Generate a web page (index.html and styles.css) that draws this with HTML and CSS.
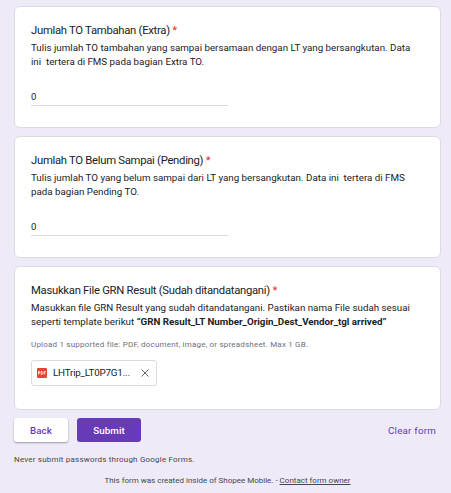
FILE: index.html
```html
<!DOCTYPE html>
<html lang="id">
<head>
    <meta charset="UTF-8">
    <meta name="viewport" content="width=device-width, initial-scale=1.0">
    <title>Form</title>
    <link rel="stylesheet" href="styles.css">
</head>
<body>
    <form class="form" onsubmit="return false">
        <div class="card">
            <h2 class="title">Jumlah TO Tambahan (Extra) <span class="required">*</span></h2>
            <p class="description">Tulis jumlah TO tambahan yang sampai bersamaan dengan LT yang bersangkutan. Data<br>ini&nbsp; tertera di FMS pada bagian Extra TO.</p>
            <input class="answer" type="text" value="0" aria-label="Jumlah TO Tambahan">
        </div>

        <div class="card">
            <h2 class="title">Jumlah TO Belum Sampai (Pending) <span class="required">*</span></h2>
            <p class="description">Tulis jumlah TO yang belum sampai dari LT yang bersangkutan. Data ini&nbsp; tertera di FMS<br>pada bagian Pending TO.</p>
            <input class="answer" type="text" value="0" aria-label="Jumlah TO Belum Sampai">
        </div>

        <div class="card card-file">
            <h2 class="title">Masukkan File GRN Result (Sudah ditandatangani) <span class="required">*</span></h2>
            <p class="description">Masukkan file GRN Result yang sudah ditandatangani. Pastikan nama File sudah sesuai<br>seperti template berikut <b>“GRN Result_LT Number_Origin_Dest_Vendor_tgl arrived”</b></p>
            <p class="hint">Upload 1 supported file: PDF, document, image, or spreadsheet. Max 1 GB.</p>
            <div class="file">
                <svg class="file-icon" viewBox="0 0 10 10" width="10" height="10">
                    <rect width="10" height="10" rx="1" fill="#ea4335"/>
                    <path d="M1.500 6.500v-3h1.200v1.600H1.700M4.200 3.500v3h.8l.7-.8V4.300l-.7-.8zM7.200 6.500v-3h1.500M7.200 5h1.200" fill="none" stroke="#fff" stroke-width=".8"/>
                </svg>
                <span class="file-name">LHTrip_LT0P7G1...</span>
                <svg class="file-remove" viewBox="0 0 8 8" width="8" height="8">
                    <path d="M.5.5l7 7M7.500.5l-7 7" fill="none" stroke="#5f6368" stroke-width="1"/>
                </svg>
            </div>
        </div>

        <div class="actions">
            <button class="btn btn-back" type="button">Back</button>
            <button class="btn btn-submit" type="submit">Submit</button>
            <button class="btn btn-clear" type="reset">Clear form</button>
        </div>
    </form>

    <footer>
        <p class="warning">Never submit passwords through Google Forms.</p>
        <p class="created">This form was created inside of Shopee Mobile. - <a href="#">Contact form owner</a></p>
    </footer>
</body>
</html>
```
FILE: styles.css
```css
* {
    box-sizing: border-box;
}

body {
    margin: 0;
    padding: 6px 10px 0 14px;
    font-family: Roboto, "Liberation Sans", sans-serif;
    background-color: #eeeaf8;
    color: #202124;
    overflow: hidden;
}

h2, p {
    margin: 0;
    font-weight: 400;
}

.card {
    height: 122px;
    margin-bottom: 8px;
    padding: 15px 16px 0 16px;
    background-color: #fff;
    border: 1px solid #dadce0;
    border-radius: 6px;
}

.card-file {
    height: 144px;
}

.title {
    font-size: 11.3px;
    line-height: 17px;
    letter-spacing: -0.29px;
    white-space: nowrap;
}

.required {
    color: #d93025;
}

.description {
    font-size: 9.78px;
    line-height: 14px;
    margin-top: 2px;
    white-space: nowrap;
}

.description b {
    font-weight: 700;
}

.answer {
    display: block;
    width: 197px;
    height: 18px;
    margin-top: 19px;
    padding: 0;
    border: none;
    border-bottom: 1px solid #dadce0;
    outline: none;
    background: none;
    font: 9.5px Roboto, sans-serif;
    color: #202124;
}

.hint {
    margin-top: 9px;
    font-size: 8px;
    line-height: 13px;
    letter-spacing: 0.2px;
    color: #6d7176;
}

.file {
    display: flex;
    align-items: center;
    width: 126px;
    height: 26px;
    margin-top: 9px;
    padding: 0 7px 0 5px;
    border: 1px solid #dadce0;
    border-radius: 3px;
}

.file-name {
    flex: 1;
    margin-left: 6px;
    padding-bottom: 1px;
    font-size: 9.8px;
    letter-spacing: -0.2px;
}

.actions {
    display: flex;
    align-items: center;
    height: 24px;
}

.btn {
    height: 24px;
    padding: 0;
    border: none;
    border-radius: 3px;
    font: 500 9.78px Roboto, sans-serif;
    letter-spacing: 0.1px;
    color: #673ab7;
    background: none;
    cursor: pointer;
}

.btn-back {
    width: 54px;
    background-color: #fff;
    box-shadow: 0 1px 2px rgba(0, 0, 0, 0.35);
}

.btn-submit {
    width: 64px;
    margin-left: 9px;
    color: #fff;
    background-color: #673ab7;
}

.btn-clear {
    margin-left: auto;
    margin-right: 5px;
    font-weight: 400;
    letter-spacing: 0.22px;
}

.warning {
    margin-top: 10.5px;
    font-size: 8px;
    line-height: 14px;
    letter-spacing: 0.2px;
    color: #47464c;
}

.created {
    margin-top: 7px;
    font-size: 8px;
    line-height: 14px;
    text-align: center;
    color: #47464c;
}

.created a {
    color: inherit;
}
```
